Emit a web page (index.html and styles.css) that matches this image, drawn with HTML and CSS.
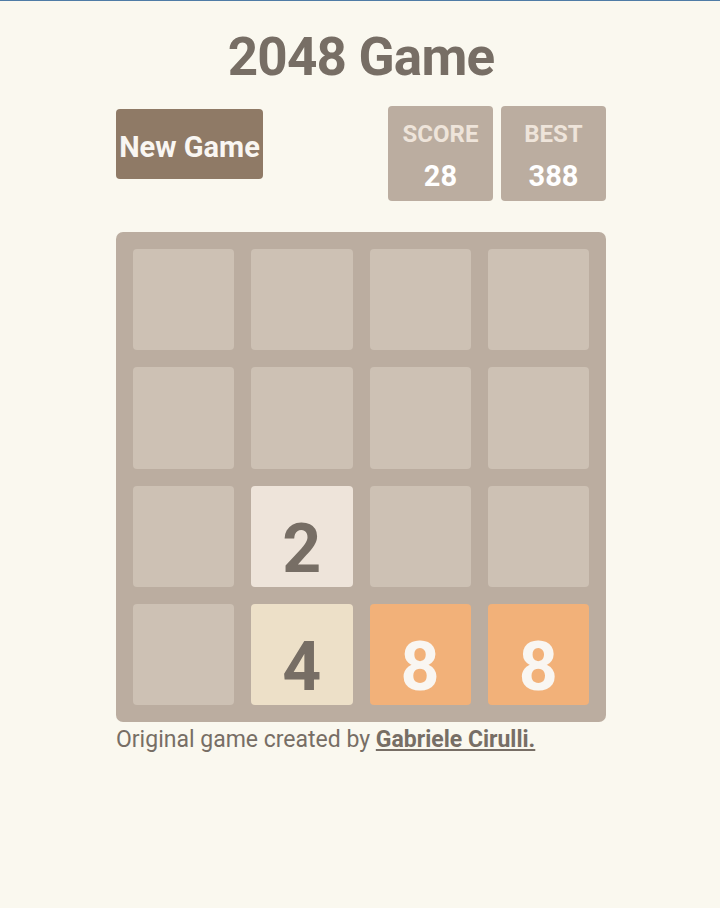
FILE: index.html
```html
<!DOCTYPE html>
<html>
<head>
<meta charset="utf-8">
<link rel="stylesheet" href="styles.css">
</head>
<body>
<div class="page">
  <h1 class="title">2048 Game</h1>
  <div class="header">
    <button class="new-game">New Game</button>
    <div class="scores">
      <div class="score-box"><div class="label">SCORE</div><div class="value">28</div></div>
      <div class="score-box"><div class="label">BEST</div><div class="value">388</div></div>
    </div>
  </div>
  <div class="board">
    <div class="cell"></div><div class="cell"></div><div class="cell"></div><div class="cell"></div>
    <div class="cell"></div><div class="cell"></div><div class="cell"></div><div class="cell"></div>
    <div class="cell"></div><div class="cell t2">2</div><div class="cell"></div><div class="cell"></div>
    <div class="cell"></div><div class="cell t4">4</div><div class="cell t8">8</div><div class="cell t8">8</div>
  </div>
  <p class="credit">Original game created by <a class="author" href="#">Gabriele Cirulli.</a></p>
</div>
</body>
</html>
```
FILE: styles.css
```css
html, body {
  margin: 0;
  padding: 0;
}
body {
  background: #faf8ef;
  border-top: 1px solid #4f7ca6;
  font-family: Roboto, "Liberation Sans", sans-serif;
  color: #776e65;
  height: 907px;
}
.page {
  width: 490px;
  margin-left: 116px;
}
.title {
  margin: 0;
  padding-top: 30px;
  font-size: 53px;
  line-height: 53px;
  letter-spacing: -0.8px;
  font-weight: 700;
  text-align: center;
  color: #776e65;
}
.header {
  margin-top: 22px;
  display: flex;
  justify-content: space-between;
  align-items: flex-start;
}
.new-game {
  margin-top: 3px;
  width: 147px;
  height: 70px;
  border: 0;
  border-radius: 4px;
  background: #8f7a66;
  color: #f9f6f2;
  font-family: Roboto, "Liberation Sans", sans-serif;
  font-weight: 700;
  font-size: 29px;
  line-height: 29px;
  padding: 7px 0 0 0;
  white-space: nowrap;
  display: flex;
  justify-content: center;
  align-items: center;
}
.scores {
  display: flex;
  gap: 8px;
}
.score-box {
  width: 105px;
  height: 95px;
  box-sizing: border-box;
  padding-top: 16px;
  background: #bbada0;
  border-radius: 4px;
  display: flex;
  flex-direction: column;
  align-items: center;
  gap: 16px;
}
.label {
  font-size: 24px;
  line-height: 24px;
  font-weight: 700;
  color: #eee4da;
}
.value {
  font-size: 29px;
  line-height: 29px;
  font-weight: 700;
  color: #ffffff;
}
.board {
  margin-top: 31px;
  width: 490px;
  height: 490px;
  box-sizing: border-box;
  padding: 17px;
  background: #bbada0;
  border-radius: 7px;
  display: grid;
  grid-template-columns: repeat(4, 1fr);
  grid-template-rows: repeat(4, 1fr);
  gap: 17px;
}
.cell {
  background: #cdc1b4;
  border-radius: 4px;
  display: flex;
  justify-content: center;
  align-items: flex-start;
  box-sizing: border-box;
  padding-top: 29px;
  font-size: 68px;
  line-height: 68px;
  font-weight: 700;
}
.t2 { background: #eee4da; color: #776e65; }
.t4 { background: #ede0c8; color: #776e65; }
.t8 { background: #f2b179; color: #f9f6f2; }
.credit {
  margin: 5px 0 0 0;
  font-size: 23px;
  line-height: 26px;
  color: #776e65;
}
.author {
  color: #776e65;
  font-weight: 700;
  text-decoration: underline;
}
```
